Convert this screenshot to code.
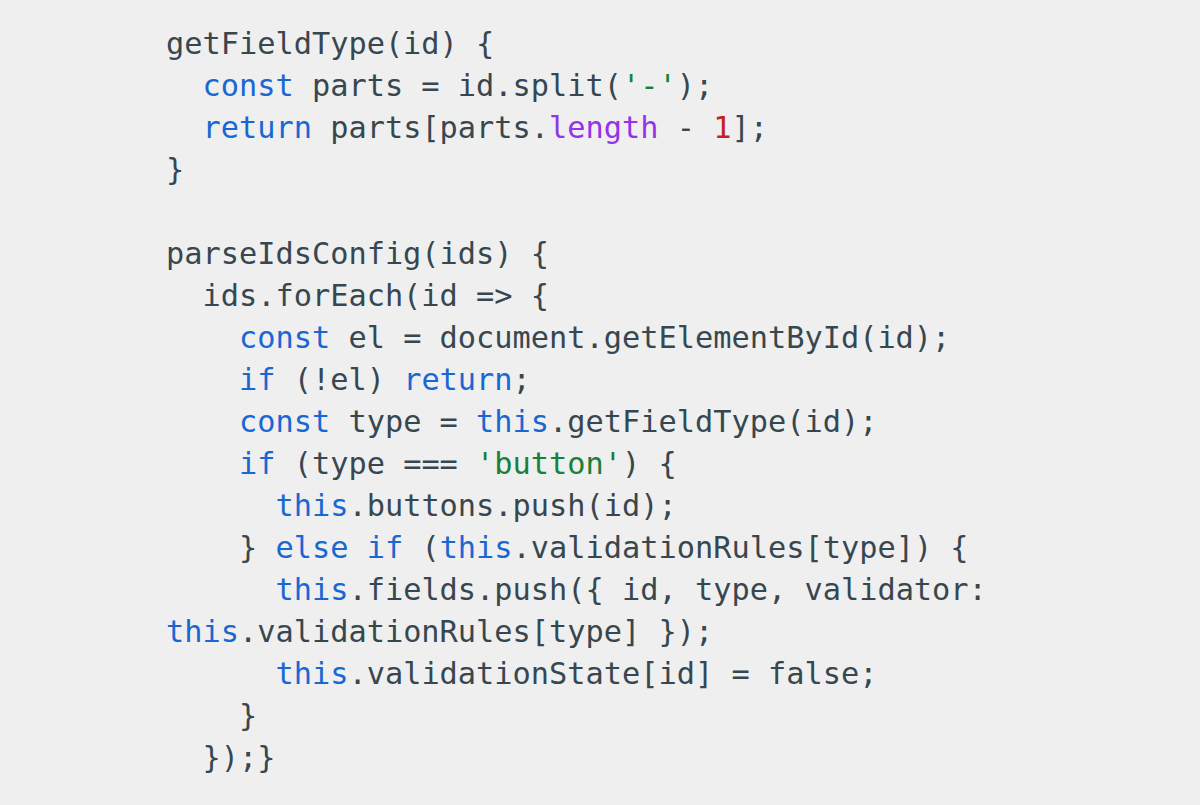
type Tok = [string, string?];

const K = "text-[#1a67d2]";
const S = "text-[#188038]";
const P = "text-[#9334e6]";
const N = "text-[#c5221f]";

const lines: Tok[][] = [
  [["getFieldType(id) {"]],
  [["  "], ["const", K], [" parts = id.split("], ["'-'", S], [");"]],
  [["  "], ["return", K], [" parts[parts."], ["length", P], [" - "], ["1", N], ["];"]],
  [["}"]],
  [[""]],
  [["parseIdsConfig(ids) {"]],
  [["  ids.forEach(id => {"]],
  [["    "], ["const", K], [" el = document.getElementById(id);"]],
  [["    "], ["if", K], [" (!el) "], ["return", K], [";"]],
  [["    "], ["const", K], [" type = "], ["this", K], [".getFieldType(id);"]],
  [["    "], ["if", K], [" (type === "], ["'button'", S], [") {"]],
  [["      "], ["this", K], [".buttons.push(id);"]],
  [["    } "], ["else if", K], [" ("], ["this", K], [".validationRules[type]) {"]],
  [["      "], ["this", K], [".fields.push({ id, type, validator:"]],
  [["this", K], [".validationRules[type] });"]],
  [["      "], ["this", K], [".validationState[id] = false;"]],
  [["    }"]],
  [["  });}"]],
];

export default function App() {
  return (
    <div className="w-[1200px] h-[805px] bg-[#efefef] overflow-hidden">
      <div
        className="pl-[166px] pt-[23px] text-[#37474f] text-[30.3px] leading-[42px]"
        style={{ fontFamily: '"DejaVu Sans Mono", "Liberation Mono", monospace' }}
      >
        {lines.map((line, i) => (
          <div key={i} className="whitespace-pre h-[42px]">
            {line.map(([text, cls], j) => (
              <span key={j} className={cls}>
                {text}
              </span>
            ))}
          </div>
        ))}
      </div>
    </div>
  );
}
